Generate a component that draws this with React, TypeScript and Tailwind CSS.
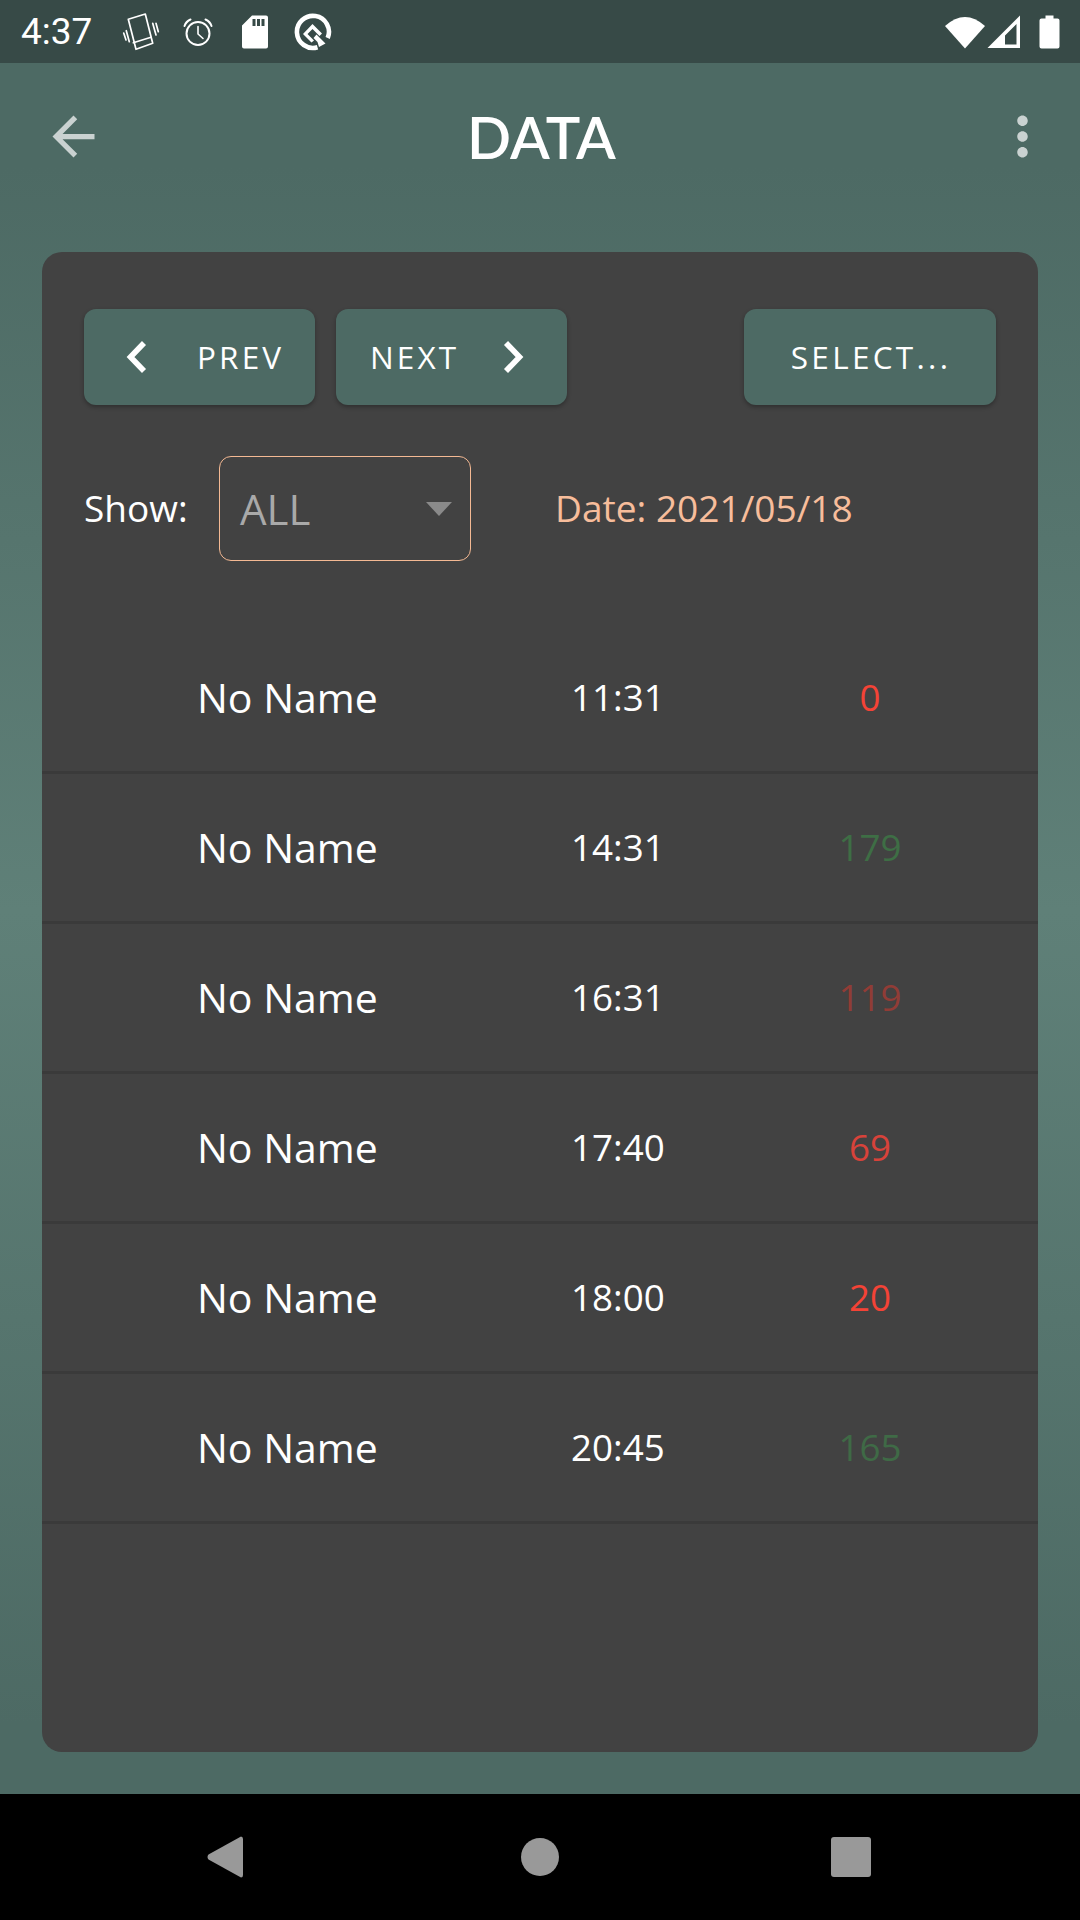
const rows = [
  { time: "11:31", value: "0", color: "text-[#f44336]" },
  { time: "14:31", value: "179", color: "text-[#3e6e45]" },
  { time: "16:31", value: "119", color: "text-[#913c36]" },
  { time: "17:40", value: "69", color: "text-[#d8423a]" },
  { time: "18:00", value: "20", color: "text-[#f44336]" },
  { time: "20:45", value: "165", color: "text-[#3f6a46]" },
];

function Chevron({ right = false }: { right?: boolean }) {
  return (
    <svg width="21" height="32" viewBox="0 0 21 32" className="shrink-0">
      <path
        d={right ? "M3 2 L16.5 16 L3 30" : "M18 2 L4.5 16 L18 30"}
        fill="none"
        stroke="#fff"
        strokeWidth="5.6"
      />
    </svg>
  );
}

function StatusIcons() {
  return (
    <div className="flex items-center ml-[29px]">
      <svg width="40" height="40" viewBox="0 0 40 40" className="shrink-0">
        <g fill="none" stroke="#fff" strokeWidth="1.7" strokeLinecap="round" strokeLinejoin="round">
          <path d="M7.3 7.3 L24.3 2 L31.7 31.3 L15 37.3 Z" />
          <path d="M12.3 30.7 L30 25.3" />
          <path d="M2.7 21 L5 28 M5.3 18.7 L8.3 29.7" />
          <path d="M31.7 11.3 L35 23 M35 11.3 L37.3 19.7" />
        </g>
      </svg>
      <svg width="32" height="32" viewBox="0 0 32 32" className="shrink-0 ml-[21px]">
        <g fill="none" stroke="#fff" strokeWidth="2" strokeLinecap="round">
          <circle cx="16" cy="17.5" r="11.5" />
          <path d="M16 10.5 V18 L21 22.5" strokeWidth="1.6" />
          <path d="M2.5 10 Q4 5.5 8.5 3.5 M29.5 10 Q28 5.5 23.5 3.5" />
        </g>
      </svg>
      <svg width="28" height="34" viewBox="0 0 28 34" className="shrink-0 ml-[27px]">
        <path
          fillRule="evenodd"
          d="M11 0.5 H25 Q27 0.5 27 2.5 V31.5 Q27 33.5 25 33.5 H3 Q1 33.5 1 31.5 V10.5 Z M11.5 4 V11 H14.5 V4 Z M16 4 V11 H19 V4 Z M20.5 4 V11 H23.5 V4 Z"
          fill="#fff"
        />
      </svg>
      <svg width="38" height="38" viewBox="0 0 38 38" className="shrink-0 ml-[25px]">
        <path
          d="M23.5 34.2 A16 16 0 1 1 33.7 25"
          fill="none"
          stroke="#fff"
          strokeWidth="4.6"
        />
        <path d="M18.5 11 L28 20.5 L25.5 23 L18.5 16 L13.5 21 L20 27.5 L17.5 29.5 L9 21 Z" fill="#fff" />
        <path d="M19.5 25 L22.5 21.5 L31.5 30.5 L25 34 L23.5 29 Z" fill="#fff" />
      </svg>
    </div>
  );
}

function SystemIcons() {
  return (
    <div className="flex items-center">
      <svg width="42" height="34" viewBox="0 0 42 34" className="shrink-0">
        <path d="M1 11 Q21 -7 41 11 L21 33.5 Z" fill="#fff" />
      </svg>
      <svg width="34" height="34" viewBox="0 0 34 34" className="shrink-0 ml-[1px]">
        <path
          fillRule="evenodd"
          d="M33 0.5 V33 H0.5 Z M29.5 9 L18 20.5 V29.5 H29.5 Z"
          fill="#fff"
        />
      </svg>
      <svg width="21" height="34" viewBox="0 0 21 34" className="shrink-0 ml-[18px]">
        <path
          d="M6.5 0.5 H14.5 V3.5 H18.5 Q20.5 3.5 20.5 5.5 V31.5 Q20.5 33.5 18.5 33.5 H2.5 Q0.5 33.5 0.5 31.5 V5.5 Q0.5 3.5 2.5 3.5 H6.5 Z"
          fill="#fff"
        />
      </svg>
    </div>
  );
}

export default function App() {
  return (
    <div className="w-[1080px] h-[1920px] flex flex-col overflow-hidden bg-black font-['Open_Sans',sans-serif]">
      <div className="h-[63px] shrink-0 bg-[#374a47] flex items-center justify-between pl-[21px] pr-[20px]">
        <div className="flex items-center">
          <span className="text-[37px] leading-none text-white font-['Roboto',sans-serif]">4:37</span>
          <StatusIcons />
        </div>
        <SystemIcons />
      </div>

      <div className="h-[1731px] shrink-0 flex flex-col bg-[linear-gradient(to_bottom,#4d6a64_0%,#4d6a64_6%,#5f8078_49%,#4d6a64_96%,#4d6a64_100%)]">
        <div className="h-[189px] shrink-0 pl-[42px] pr-[26px] pt-[42px]">
          <div className="flex items-center justify-between h-[63px]">
            <svg width="63" height="63" viewBox="0 0 24 24" className="shrink-0" fill="#fff" fillOpacity="0.7">
              <path d="M20 11H7.83l5.59-5.59L12 4l-8 8 8 8 1.41-1.41L7.83 13H20v-2z" />
            </svg>
            <span className="text-[58px] leading-none font-semibold text-white font-['Lato',sans-serif] mr-[13px]">DATA</span>
            <svg width="63" height="63" viewBox="0 0 24 24" className="shrink-0" fill="#fff" fillOpacity="0.7">
              <path d="M12 8c1.1 0 2-.9 2-2s-.9-2-2-2-2 .9-2 2 .9 2 2 2zm0 2c-1.1 0-2 .9-2 2s.9 2 2 2 2-.9 2-2-.9-2-2-2zm0 6c-1.1 0-2 .9-2 2s.9 2 2 2 2-.9 2-2-.9-2-2-2z" />
            </svg>
          </div>
        </div>

        <div className="w-[996px] h-[1500px] ml-[42px] rounded-[20px] bg-[#424242] pt-[57px]">
          <div className="flex items-start pl-[42px] pr-[42px]">
            <button className="w-[231px] h-[96px] rounded-[12px] bg-[#4d6a64] shadow-[0_2px_4px_rgba(0,0,0,0.3)] flex items-center pl-[42px] text-white text-[31.5px] tracking-[0.1em]">
              <Chevron />
              <span className="ml-[50px]">PREV</span>
            </button>
            <button className="w-[231px] h-[96px] ml-[21px] rounded-[12px] bg-[#4d6a64] shadow-[0_2px_4px_rgba(0,0,0,0.3)] flex items-center pl-[34px] text-white text-[31.5px] tracking-[0.1em]">
              <span>NEXT</span>
              <span className="ml-[44px]"><Chevron right /></span>
            </button>
            <button className="w-[252px] h-[96px] ml-auto rounded-[12px] bg-[#4d6a64] shadow-[0_2px_4px_rgba(0,0,0,0.3)] flex items-center justify-center pl-[2px] text-white text-[31.5px] tracking-[0.105em]">
              SELECT...
            </button>
          </div>

          <div className="flex items-center pl-[42px] mt-[51px]">
            <span className="w-[135px] pb-[2px] text-[37px] leading-none text-white">Show:</span>
            <div className="w-[252px] h-[105px] rounded-[12px] border-[1.5px] border-[#f4b993] flex items-center justify-between pl-[20px] pr-[18px]">
              <span className="text-[42px] leading-none text-[#a9a9a9]">ALL</span>
              <svg width="26" height="14" viewBox="0 0 26 14">
                <path d="M0 0 H26 L13 14 Z" fill="#8a8a8a" />
              </svg>
            </div>
            <span className="ml-[84px] pb-[2px] text-[37.1px] leading-none text-[#f7bd9b]">Date: 2021/05/18</span>
          </div>

          <div className="mt-[63px]">
            {rows.map((r) => (
              <div key={r.time} className="h-[150px] flex items-center border-b-[3px] border-[#3a3a3a]">
                <span className="w-[529px] pl-[155px] text-[41px] leading-none text-white">No Name</span>
                <span className="w-[217px] text-[36.75px] leading-none text-white">{r.time}</span>
                <span className={`w-[164px] text-center text-[36.75px] leading-none ${r.color}`}>{r.value}</span>
              </div>
            ))}
          </div>
        </div>
      </div>

      <div className="h-[126px] shrink-0 bg-black flex items-center pl-[207px]">
        <svg width="36" height="42" viewBox="0 0 36 42" className="shrink-0">
          <path d="M34 0.5 Q36 0.5 36 3 V39 Q36 41.5 34 41.5 L1.5 23.5 Q-0.5 21 1.5 18.5 Z" fill="#999" />
        </svg>
        <div className="w-[38px] h-[38px] rounded-full bg-[#999] ml-[278px] shrink-0" />
        <div className="w-[40px] h-[40px] rounded-[3px] bg-[#999] ml-[272px] shrink-0" />
      </div>
    </div>
  );
}
